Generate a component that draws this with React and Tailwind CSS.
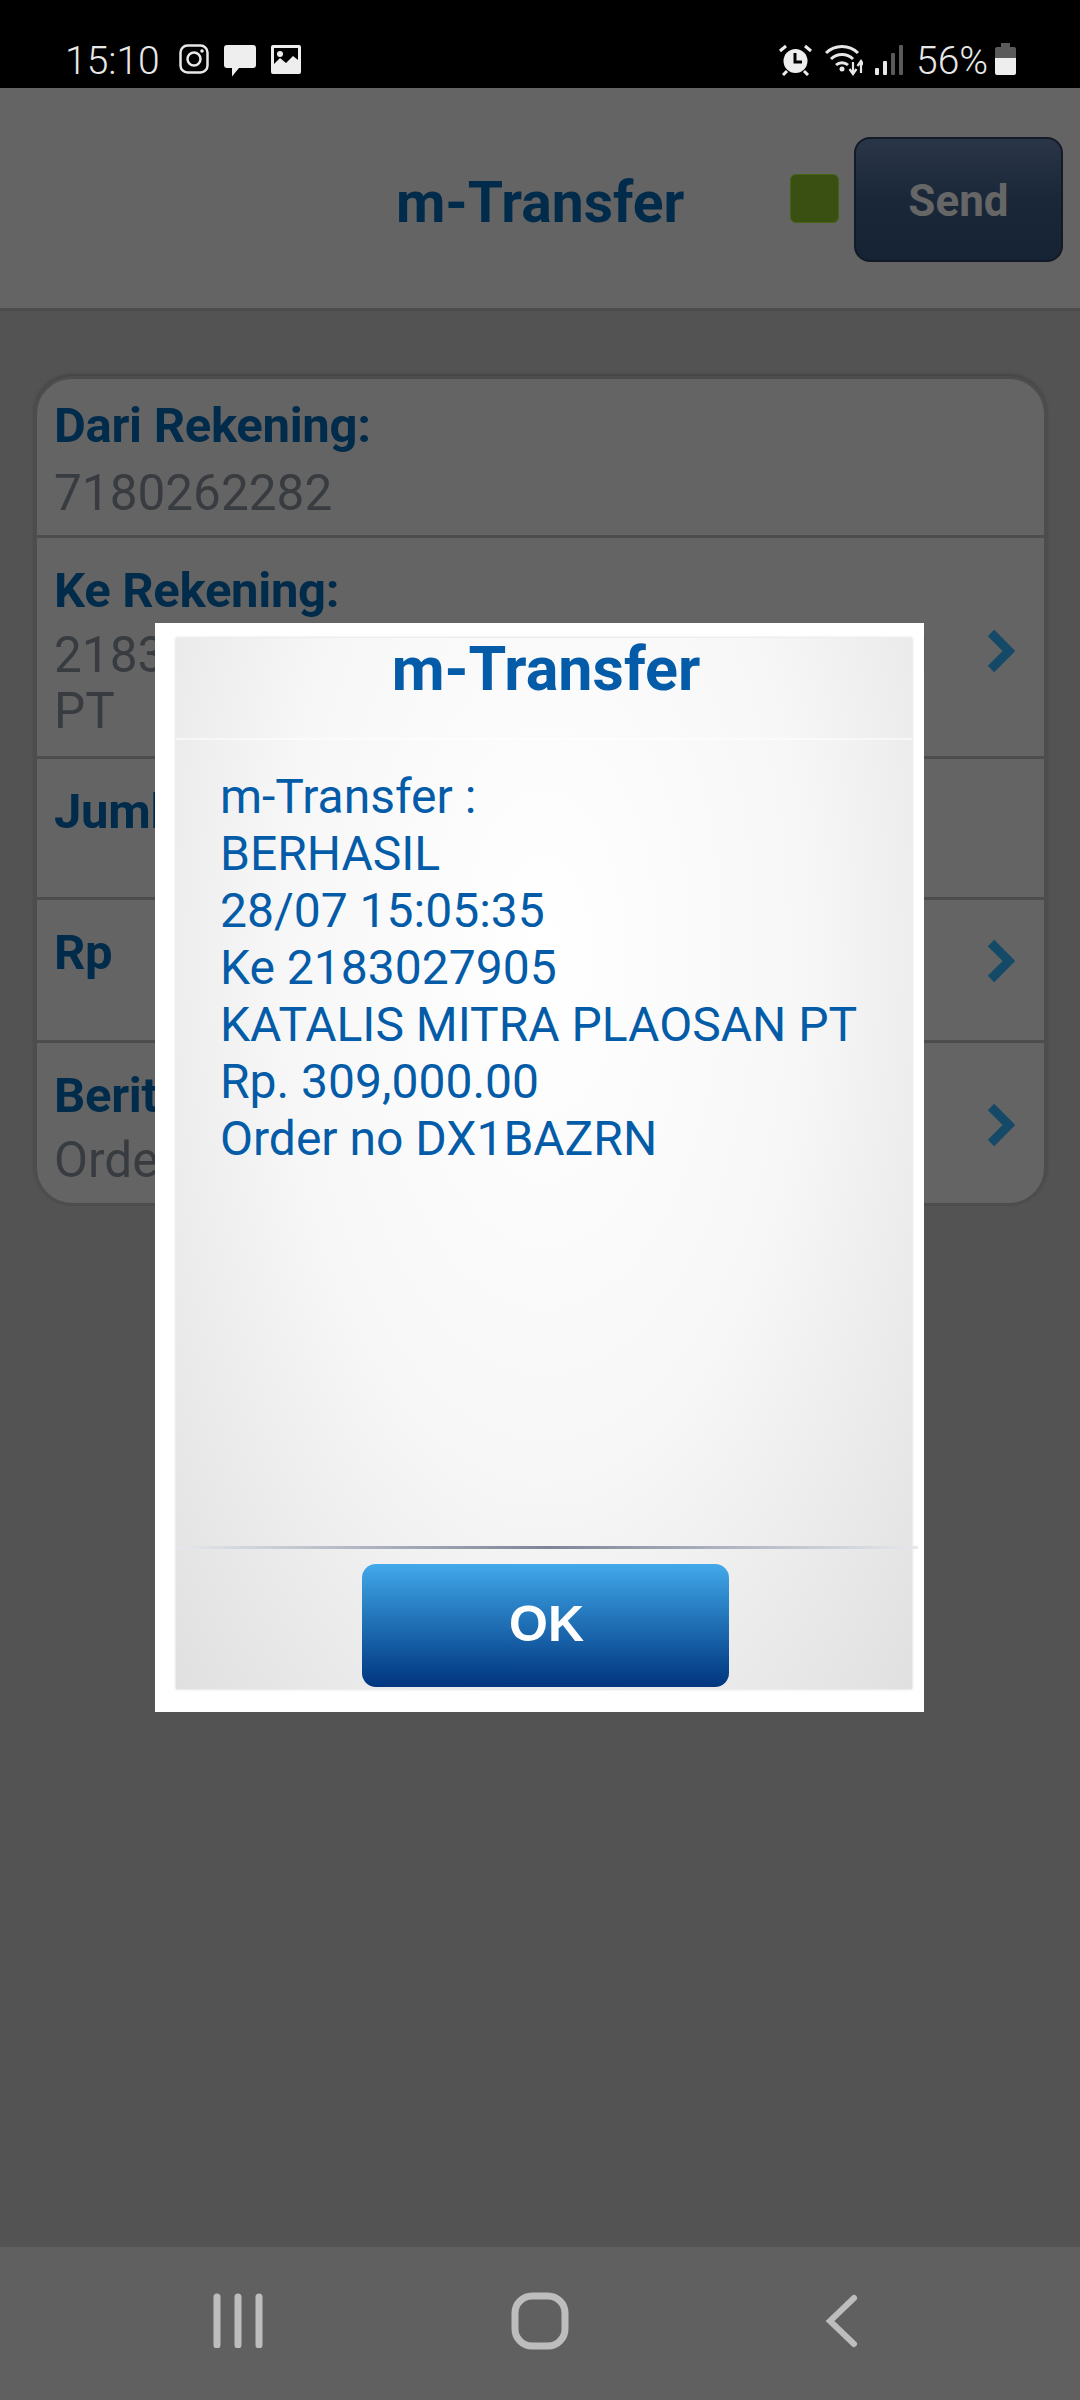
import React from 'react';

const font = { fontFamily: 'Roboto, "Noto Sans", sans-serif' };

const Chevron = ({ className }) => (
  <svg width="30" height="44" viewBox="0 0 30 44" className={className}>
    <polyline points="6,4 24,22 6,40" fill="none" stroke="#144a68" strokeWidth="9" />
  </svg>
);

const StatusBar = () => (
  <div className="h-[88px] bg-black flex items-start text-[#e8e8e8] pt-[44px] pl-[65px] pr-[64px]">
    <span className="text-[39px] leading-[35px] font-light w-[114px]">15:10</span>
    {/* instagram */}
    <svg width="30" height="30" viewBox="0 0 30 30" className="mr-[15px]">
      <rect x="1.5" y="1.5" width="27" height="27" rx="7" fill="none" stroke="#e8e8e8" strokeWidth="2.5" />
      <circle cx="15" cy="15" r="6.5" fill="none" stroke="#e8e8e8" strokeWidth="2.5" />
      <circle cx="23" cy="7" r="1.8" fill="#e8e8e8" />
    </svg>
    {/* message */}
    <svg width="32" height="33" viewBox="0 0 32 33" className="mr-[15px]">
      <path d="M3 1h26a3 3 0 0 1 3 3v17a3 3 0 0 1-3 3H15l-7 8.500V24H3a3 3 0 0 1-3-3V4a3 3 0 0 1 3-3z" fill="#eeeeee" />
    </svg>
    {/* gallery */}
    <svg width="30" height="30" viewBox="0 0 30 30">
      <path fillRule="evenodd" d="M2 1h26a2 2 0 0 1 2 2v25a2 2 0 0 1-2 2H2a2 2 0 0 1-2-2V3a2 2 0 0 1 2-2zM3 4v16l6-6 6 5 7-7 5 4V4z" fill="#eeeeee" />
      <circle cx="9" cy="10" r="3" fill="#eeeeee" />
    </svg>

    <div className="flex-1" />

    {/* alarm */}
    <svg width="33" height="32" viewBox="0 0 33 32" className="mr-[13px]">
      <circle cx="16.500" cy="17" r="12" fill="#eeeeee" />
      <path d="M16 9v9h7" fill="none" stroke="#000" strokeWidth="3" />
      <path d="M1 7l6-5M32 7l-6-5M4 31l4-4M29 31l-4-4" stroke="#eeeeee" strokeWidth="3" />
    </svg>
    {/* wifi */}
    <svg width="38" height="32" viewBox="0 0 38 32" className="mr-[12px]">
      <path d="M1 9a23 23 0 0 1 32 0M6 15a16 16 0 0 1 22 0M11 21a9 9 0 0 1 12 0" fill="none" stroke="#e8e8e8" strokeWidth="3" />
      <circle cx="17" cy="25" r="2.500" fill="#e8e8e8" />
      <path d="M28 18v11M24.500 25l3.500 5 3.500-5M36 29v-11M32.500 22l3.500-5 3.500 5" fill="none" stroke="#e8e8e8" strokeWidth="2.200" />
    </svg>
    {/* signal */}
    <svg width="28" height="31" viewBox="0 0 28 31" className="mr-[13px]">
      <rect x="0" y="24" width="4" height="7" rx="1" fill="#e8e8e8" />
      <rect x="8" y="17" width="4" height="14" rx="1" fill="#e8e8e8" />
      <rect x="16" y="9" width="4" height="22" rx="1" fill="#5a5a5a" />
      <rect x="24" y="1" width="4" height="30" rx="1" fill="#5a5a5a" />
    </svg>
    <span className="text-[39px] leading-[35px] font-light w-[79px]">56%</span>
    {/* battery */}
    <svg width="21" height="32" viewBox="0 0 21 32" className="-mt-px">
      <path d="M6 0h9v4h4a2 2 0 0 1 2 2v9H0V6a2 2 0 0 1 2-2h4z" fill="#5a5a5a" />
      <path d="M0 15h21v15a2 2 0 0 1-2 2H2a2 2 0 0 1-2-2z" fill="#eeeeee" />
    </svg>
  </div>
);

const Header = () => (
  <div className="h-[223px] bg-[#646464] border-b-[3px] border-[#4d4d4d] flex items-start">
    <h1 className="ml-[396px] mt-[82px] text-[57px] leading-[66px] font-bold text-[#002b4a] w-[394px]">m-Transfer</h1>
    <div className="mt-[86px] w-[49px] h-[49px] rounded-md bg-[#3a5012] border border-[#466416]" />
    <button className="ml-[15px] mt-[49px] w-[209px] h-[125px] pt-[2px] rounded-2xl border-2 border-[#111a26] bg-gradient-to-b from-[#2a3648] via-[#1a2738] to-[#162334] text-[44px] font-bold text-[#666666]">
      Send
    </button>
  </div>
);

const Row = ({ label, lines, chevronClass, heightClass, paddingClass, gapClass = 'mb-[8px]', last }) => (
  <div className={`flex items-start justify-between pl-[17px] pr-[29px] ${paddingClass} ${heightClass} ${last ? '' : 'border-b-[3px] border-[#4d4d4d]'}`}>
    <div>
      <div className={`text-[49px] leading-[57px] font-bold text-[#002b4a] tracking-[-0.3px] ${gapClass}`}>{label}</div>
      {lines && (
        <div className="text-[49.5px] leading-[56px] text-[#383c40] whitespace-pre">{lines}</div>
      )}
    </div>
    {chevronClass && <Chevron className={chevronClass} />}
  </div>
);

const Dialog = () => (
  <div className="absolute left-[155px] top-[623px] w-[769px] h-[1089px] bg-white pt-[15px] pl-[21px] pr-[12px] pb-[23px]">
    <div className="h-full flex flex-col bg-[radial-gradient(ellipse_at_50%_30%,#ffffff_0%,#f7f7f7_50%,#e0e0e0_100%)] shadow-[0_0_3px_#cfcfcf]">
      <div className="h-[102px] text-center border-b-2 border-white/50">
        <h2 className="pl-[4px] text-[61px] leading-[62px] font-bold text-[#045ca8]">m-Transfer</h2>
      </div>
      <div className="flex-1 pl-[44px] pt-[28px] text-[48px] leading-[57px] text-[#045ca8]">
        <div>m-Transfer :</div>
        <div>BERHASIL</div>
        <div>28/07 15:05:35</div>
        <div>Ke 2183027905</div>
        <div>KATALIS MITRA PLAOSAN PT</div>
        <div>Rp. 309,000.00</div>
        <div>Order no DX1BAZRN</div>
      </div>
      <div className="h-[3px] -mr-[6px] bg-gradient-to-r from-[#e6e8ec] via-[#7d8597] to-[#e6e8ec]" />
      <div className="h-[140px] pt-[15px] pl-[2px] flex justify-center">
        <button
          className="w-[367px] h-[123px] pl-[3px] pb-[2px] rounded-[14px] bg-gradient-to-b from-[#42a9ea] to-[#03357f] text-white text-[50px] font-bold"
          style={{ fontFamily: '"Liberation Sans", Arial, sans-serif' }}
        >
          OK
        </button>
      </div>
    </div>
  </div>
);

const NavBar = () => (
  <div className="h-[153px] bg-[#606060] flex items-start pt-[45px]">
    <svg width="50" height="56" viewBox="0 0 50 56" className="ml-[213px]">
      <path d="M4 5v48M25 5v48M46 5v48" stroke="#bdbdbd" strokeWidth="7" strokeLinecap="round" fill="none" />
    </svg>
    <svg width="58" height="58" viewBox="0 0 58 58" className="ml-[248px]">
      <rect x="4" y="4" width="50" height="50" rx="17" fill="none" stroke="#bdbdbd" strokeWidth="7" />
    </svg>
    <svg width="34" height="56" viewBox="0 0 34 56" className="ml-[256px] mt-[1px]">
      <path d="M29 5L5 28l24 23" fill="none" stroke="#bdbdbd" strokeWidth="6" strokeLinecap="round" />
    </svg>
  </div>
);

export default function App() {
  return (
    <div className="relative w-[1080px] h-[2400px] flex flex-col bg-[#535353] overflow-hidden" style={font}>
      <StatusBar />
      <Header />
      <div className="flex-1 pt-[65px] px-[34px]">
        <div className="w-[1013px] h-[830px] rounded-[38px] bg-[#646464] border-[3px] border-[#4d4d4d] overflow-hidden shadow-[0_-2px_3px_#444]">
          <Row label="Dari Rekening:" lines="7180262282" heightClass="h-[159px]" paddingClass="pt-[18px]" gapClass="mb-[11px]" />
          <Row
            label="Ke Rekening:"
            lines={'2183027905 KATALIS MITRA PLAOSAN\nPT'}
            chevronClass="mt-[67px]"
            heightClass="h-[221px]"
            paddingClass="pt-[24px]"
          />
          <Row label="Jumlah:" heightClass="h-[141px]" paddingClass="pt-[24px]" />
          <Row label="Rp" chevronClass="mt-[15px]" heightClass="h-[143px]" paddingClass="pt-[24px]" />
          <Row
            label="Berita:"
            lines="Order no DX1BAZRN"
            chevronClass="mt-[36px]"
            heightClass="h-[163px]"
            paddingClass="pt-[24px]"
            last
          />
        </div>
      </div>
      <NavBar />
      <Dialog />
    </div>
  );
}
